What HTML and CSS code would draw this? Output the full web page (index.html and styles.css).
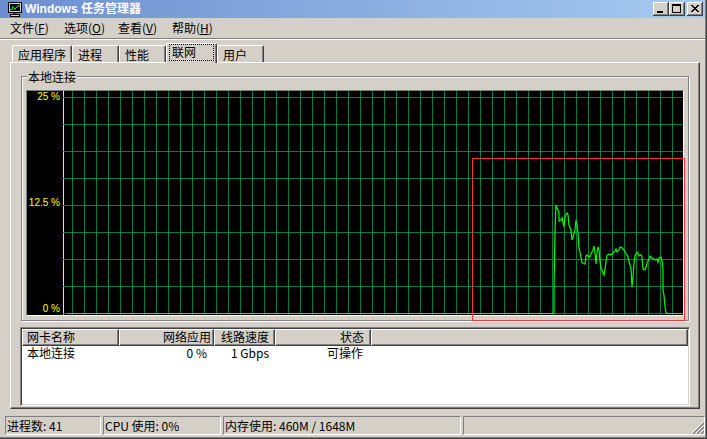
FILE: index.html
```html
<!DOCTYPE html>
<html lang="zh-CN">

<head>
    <meta charset="UTF-8">
    <title>Windows 任务管理器</title>
    <link rel="stylesheet" href="styles.css">
</head>

<body>
    <div class="window">
        <div class="titlebar">
            <svg class="app-icon" width="16" height="16" viewBox="0 0 16 16">
                <rect x="1.5" y="1.5" width="13" height="10" fill="#d4d0c8" stroke="#000" />
                <rect x="3" y="3" width="10" height="7" fill="#000" />
                <path d="M3 8.5h2l1-3 2 3 1-2h1l1-2 2 1" stroke="#0f0" fill="none" />
                <rect x="6" y="12" width="4" height="1" fill="#404040" />
                <rect x="3.5" y="13.5" width="9" height="2" fill="#d4d0c8" stroke="#000" />
            </svg>
            <span class="title">Windows 任务管理器</span>
            <div class="caption-buttons">
                <div class="cap-btn">
                    <svg width="16" height="14" shape-rendering="crispEdges">
                        <rect x="4" y="9" width="6" height="2" />
                    </svg>
                </div>
                <div class="cap-btn">
                    <svg width="16" height="14" shape-rendering="crispEdges">
                        <path d="M3 2h9v9H3z M4 4h7v6H4z" fill-rule="evenodd" />
                    </svg>
                </div>
                <div class="cap-btn close">
                    <svg width="16" height="14" shape-rendering="crispEdges">
                        <path d="M4 3h2v1H4z M10 3h2v1h-2z M5 4h2v1H5z M9 4h2v1H9z M6 5h4v1H6z M7 6h2v1H7z M6 7h4v1H6z M5 8h2v1H5z M9 8h2v1H9z M4 9h2v1H4z M10 9h2v1h-2z" />
                    </svg>
                </div>
            </div>
        </div>

        <div class="menubar">
            <span class="menu-item">文件(<u>F</u>)</span>
            <span class="menu-item">选项(<u>O</u>)</span>
            <span class="menu-item">查看(<u>V</u>)</span>
            <span class="menu-item">帮助(<u>H</u>)</span>
        </div>
        <div class="separator"></div>

        <div class="tabs">
            <div class="tab wide">应用程序</div>
            <div class="tab">进程</div>
            <div class="tab">性能</div>
            <div class="tab active"><span class="focus">联网</span></div>
            <div class="tab">用户</div>
        </div>

        <div class="panel">
            <fieldset class="group">
                <legend>本地连接</legend>
                <div class="graph">
                    <div class="axis">
                        <span>25 %</span>
                        <span>12.5 %</span>
                        <span>0 %</span>
                    </div>
                    <svg class="plot" width="620" height="224" viewBox="0 0 620 224">
                        <defs>
                            <pattern id="grid" x="9" y="6" width="12" height="27" patternUnits="userSpaceOnUse">
                                <path d="M0.5 0V27M0 0.5H12" stroke="#008040" fill="none" />
                            </pattern>
                        </defs>
                        <path d="M0.5 0V224" stroke="#ffff00" />
                        <rect width="620" height="224" fill="url(#grid)" />
                        <!-- network usage trace -->
                        <polyline fill="none" stroke="#00ff00" stroke-width="1.2"
                            points="4,222.5 491,222.5 491,195 492,141 493,114 494,117 496,121 496,130 498,129 499,127 500,131 501,136 502,126 503,123 504,122 505,124 506,134 508,139 509,149 510,146 512,139 513,129 514,134 515,142 516,157 518,166 519,172 520,172 522,173 523,165 524,164 526,166 527,166 528,163 530,159 531,155 532,162 533,173 534,162 535,156 536,159 537,170 538,177 540,182 541,184 542,178 544,164 545,164 546,163 548,164 549,163 550,162 552,160 553,158 554,161 556,159 557,156 558,156 560,158 561,159 562,161 564,164 565,166 566,171 568,177 569,196 570,186 571,172 572,165 574,161 575,162 576,165 578,164 579,166 580,178 582,179 583,176 584,172 586,168 587,165 588,166 590,168 591,168 592,169 594,168 595,171 596,167 598,166 599,170 600,179 600,199 601,204 602,216 603,221 604,222.5 619,222.5" />
                    </svg>
                </div>
            </fieldset>

            <div class="listview">
                <div class="lv-header">
                    <span class="lv-col c-name">网卡名称</span>
                    <span class="lv-col c-usage">网络应用</span>
                    <span class="lv-col c-speed">线路速度</span>
                    <span class="lv-col c-state">状态</span>
                    <span class="lv-col c-fill"></span>
                </div>
                <div class="lv-row">
                    <span class="c-name">本地连接</span>
                    <span class="c-usage">0 %</span>
                    <span class="c-speed">1 Gbps</span>
                    <span class="c-state">可操作</span>
                </div>
            </div>

            <div class="highlight"></div>
        </div>

        <div class="statusbar">
            <div class="pane p1">进程数: 41</div>
            <div class="pane p2">CPU 使用: 0%</div>
            <div class="pane p3">内存使用: 460M / 1648M</div>
            <div class="pane p4">
                <svg class="grip" width="12" height="12" viewBox="0 0 12 12">
                    <path d="M11 0L0 11M11 4L4 11M11 8L8 11" stroke="#fff" />
                    <path d="M12 1L1 12M12 5L5 12M12 9L9 12" stroke="#808080" stroke-width="1.5" />
                </svg>
            </div>
        </div>
    </div>
</body>

</html>
```

FILE: styles.css
```css
* {
    box-sizing: border-box;
}

body {
    margin: 0;
    background: #d4d0c8;
    font-family: "Noto Sans CJK SC", sans-serif;
    font-size: 12px;
    line-height: 13px;
    color: #000;
}

.window {
    width: 707px;
    height: 439px;
    padding: 0 2px 2px 0;
    background: #d4d0c8;
    box-shadow: inset -1px -1px #404040, inset -2px -2px #808080;
}

/* title bar */
.titlebar {
    display: flex;
    align-items: center;
    height: 18px;
    background: linear-gradient(to right, #6d8fd0, #a6caf0);
}

.app-icon {
    flex: none;
    margin-left: 7px;
}

.title {
    margin-left: 2px;
    color: #fff;
    font: bold 12px/18px "Liberation Sans", "Noto Sans CJK SC", sans-serif;
}

.caption-buttons {
    display: flex;
    margin-left: auto;
    margin-right: 2px;
}

.cap-btn {
    width: 16px;
    height: 14px;
    background: #d4d0c8;
    box-shadow: inset -1px -1px #404040, inset 1px 1px #fff, inset -2px -2px #808080;
}

.cap-btn svg {
    display: block;
}

.cap-btn.close {
    margin-left: 2px;
}

/* menu */
.menubar {
    display: flex;
    height: 20px;
    padding-left: 4px;
    line-height: 20px;
}

.menu-item {
    width: 54px;
    padding-left: 6px;
}

.separator {
    height: 2px;
    border-top: 1px solid #808080;
    border-bottom: 1px solid #fff;
}

/* tabs */
.tabs {
    display: flex;
    align-items: flex-end;
    height: 22px;
    padding-left: 12px;
}

.tab {
    width: 47px;
    height: 17px;
    padding: 2px 0 0 5px;
    border: 1px solid #fff;
    border-right-color: #404040;
    border-bottom: 0;
    border-radius: 2px 2px 0 0;
    box-shadow: inset -1px 0 #808080;
}

.tab.wide {
    width: 60px;
}

.tab.active {
    position: relative;
    z-index: 1;
    width: 51px;
    height: 20px;
    margin-bottom: -1px;
    padding: 0;
    background: #d4d0c8;
}

.focus {
    display: block;
    width: 45px;
    margin-left: 2px;
    padding: 0 0 2px 2px;
    border: 1px dotted #000;
}

/* tab page */
.panel {
    position: relative;
    width: 690px;
    height: 347px;
    margin-left: 10px;
    border: 1px solid;
    border-color: #fff #404040 #404040 #fff;
    box-shadow: inset -1px -1px #808080;
}

.group {
    width: 668px;
    min-inline-size: 0;
    margin: 7px 0 0 10px;
    padding: 7px 4px 4px;
    border: 1px solid #808080;
    box-shadow: inset 1px 1px #fff, 1px 1px #fff;
}

.group legend {
    margin-left: 1px;
    padding: 0 1px;
    line-height: 13px;
    background: #d4d0c8;
}

.graph {
    display: flex;
    height: 226px;
    border: 1px solid;
    border-color: #808080 #fff #fff #808080;
    background: #000;
}

.axis {
    display: flex;
    flex-direction: column;
    justify-content: space-between;
    align-items: flex-end;
    width: 36px;
    padding: 1px 3px 1px 0;
    color: #ff0;
    font: 10px/10px "Liberation Sans", sans-serif;
}

.plot {
    display: block;
}

/* list of adapters */
.listview {
    width: 670px;
    height: 79px;
    margin: 6px 0 0 9px;
    padding: 1px;
    border: 1px solid;
    border-color: #808080 #fff #fff #808080;
    box-shadow: inset 1px 1px #404040, inset -1px -1px #d4d0c8;
    background: #fff;
}

.lv-header {
    display: flex;
    height: 17px;
    background: #d4d0c8;
}

.lv-col {
    padding-left: 4px;
    border: 1px solid #fff;
    border-right-color: #404040;
    border-bottom-color: #404040;
    box-shadow: inset -1px -1px #808080;
    line-height: 13px;
    white-space: nowrap;
}

.lv-row {
    display: flex;
    padding-top: 1px;
    line-height: 12px;
    white-space: nowrap;
}

.c-name {
    flex: none;
    width: 97px;
}

.c-usage {
    flex: none;
    width: 95px;
    text-align: right;
}

.c-speed {
    flex: none;
    width: 61px;
    text-align: right;
}

.c-state {
    flex: none;
    width: 96px;
    text-align: right;
}

.c-fill {
    flex: 1;
}

.lv-header .c-usage {
    padding-right: 2px;
}

.lv-header .c-speed {
    padding-right: 5px;
}

.lv-header .c-state {
    padding-right: 6px;
}

.lv-row .c-name {
    padding-left: 5px;
}

.lv-row .c-usage {
    padding-right: 7px;
}

.lv-row .c-speed {
    padding-right: 6px;
}

.lv-row .c-state {
    padding-right: 8px;
}

/* annotation drawn over the graph */
.highlight {
    position: absolute;
    left: 461px;
    top: 95px;
    width: 213px;
    height: 163px;
    border: 1px solid #ff3333;
}

/* status bar */
.statusbar {
    display: flex;
    gap: 2px;
    height: 28px;
    padding: 7px 0 0 5px;
}

.pane {
    position: relative;
    height: 19px;
    padding: 2px 0 0 1px;
    border: 1px solid;
    border-color: #808080 #fff #fff #808080;
    white-space: nowrap;
}

.p1 {
    width: 96px;
}

.p2 {
    width: 118px;
}

.p3 {
    width: 238px;
}

.p4 {
    width: 242px;
}

.grip {
    position: absolute;
    right: 0;
    bottom: 0;
}
```
